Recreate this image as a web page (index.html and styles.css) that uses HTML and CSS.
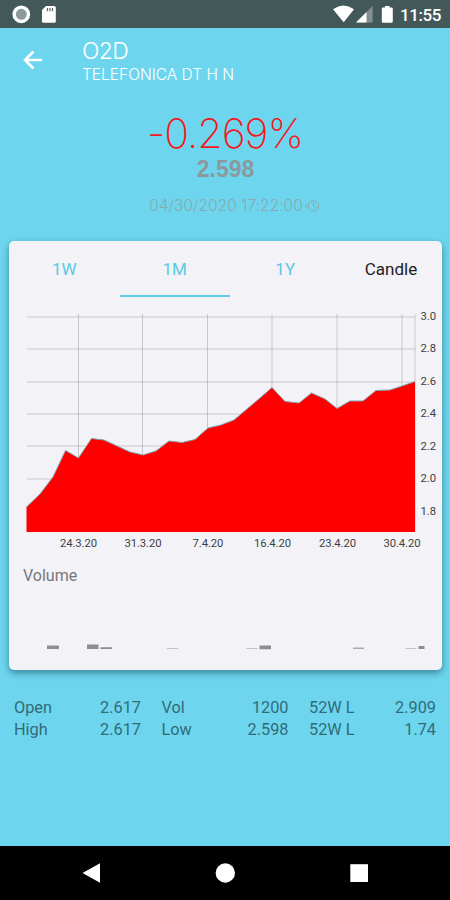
FILE: index.html
```html
<!DOCTYPE html>
<html lang="en">
<head>
<meta charset="utf-8">
<meta name="viewport" content="width=device-width">
<title>O2D</title>
<link rel="stylesheet" href="styles.css">
</head>
<body>
<div class="screen">
  <div class="status">
    <svg class="status-left" width="60" height="28" viewBox="0 0 60 28">
      <circle cx="21.3" cy="14.3" r="7.2" fill="#8e9a9a" stroke="#fff" stroke-width="3.400"/>
      <path d="M46 6h8.200q1.600 0 1.600 1.600v13.600q0 1.600-1.600 1.600H43.600Q42 22.800 42 21.200V10z" fill="#fff"/>
      <path d="M47.500 8v3.200M50 8v3.200M52.500 8v3.200" stroke="#59696a" stroke-width="1.200"/>
    </svg>
    <svg width="66" height="28" viewBox="330 0 66 28" fill="#fff">
      <path d="M333 9.200Q343.500 1.800 354 9.200L343.700 22.300z"/>
      <path d="M372.600 6v16.500H356z" fill="#82908f"/>
      <path d="M366.500 12v10.500H356z"/>
      <path d="M385 6h4.500v1.500h2q1.300 0 1.300 1.300v12.700q0 1.300-1.300 1.300h-8.400q-1.300 0-1.300-1.300V8.800q0-1.300 1.300-1.300h1.900z"/>
    </svg>
    <span class="clock">11:55</span>
  </div>

  <header class="bar">
    <svg class="back" width="20" height="20" viewBox="0 0 20 20" fill="none" stroke="#fff" stroke-width="2.600">
      <path d="M19 10H2.500M10.500 1.500L2 10l8.500 8.500"/>
    </svg>
    <div>
      <h1 class="symbol">O2D</h1>
      <p class="name">TELEFONICA DT H N</p>
    </div>
  </header>

  <section class="quote">
    <div class="change">-0.269%</div>
    <div class="price">2.598</div>
    <div class="stamp"><span>04/30/2020 17:22:00</span>
      <svg width="16" height="14" viewBox="0 0 16 14" fill="none" stroke="#89a9af" stroke-width="1">
        <circle cx="9.500" cy="7" r="5.200"/><path d="M9.500 3.500V7l2.700 1.500M1 5l2 2-2 2"/>
      </svg>
    </div>
  </section>

  <main class="card">
    <nav class="tabs">
      <span class="tab">1W</span>
      <span class="tab active">1M</span>
      <span class="tab">1Y</span>
      <span class="tab candle">Candle</span>
    </nav>
    <svg class="chart" width="432" height="250" viewBox="9 306 432 250">
      <g class="grid">
        <path d="M27 317H415M27 349H415M27 382H415M27 414H415M27 446H415M27 479H415"/>
        <path d="M78.500 314V532M142.500 314V532M207.500 314V532M272 314V532M337 314V532M402 314V532M415 314V532"/>
      </g>
      <path fill="#f00" d="M26.500 532V507L40 494 53 477 65.500 450.500 78.500 458 91.500 438.500 104 440 117 446 130 452 143 455 156 451 169 441 182 442.500 195 439.500 208 428 221 425 234 420 247 409 260 398 272 387.500 285 401.500 299 403 311.500 393 325 399 337 408.500 350 401 363 401 376 390.500 390 390 402 386 415 381.500V532z"/>
      <path class="line" d="M26.500 507L40 494 53 477 65.500 450.500 78.500 458 91.500 438.500 104 440 117 446 130 452 143 455 156 451 169 441 182 442.500 195 439.500 208 428 221 425 234 420 247 409 260 398 272 387.500 285 401.500 299 403 311.500 393 325 399 337 408.500 350 401 363 401 376 390.500 390 390 402 386 415 381.500"/>
      <g class="axis">
        <text x="420.500" y="320">3.0</text>
        <text x="420.500" y="352">2.8</text>
        <text x="420.500" y="385">2.6</text>
        <text x="420.500" y="417">2.4</text>
        <text x="420.500" y="450">2.2</text>
        <text x="420.500" y="482">2.0</text>
        <text x="420.500" y="514.500">1.8</text>
      </g>
      <g class="axis dates">
        <text x="78.500" y="547">24.3.20</text>
        <text x="143" y="547">31.3.20</text>
        <text x="208" y="547">7.4.20</text>
        <text x="272.500" y="547">16.4.20</text>
        <text x="337.500" y="547">23.4.20</text>
        <text x="402" y="547">30.4.20</text>
      </g>
    </svg>
    <h2 class="volume">Volume</h2>
    <svg class="bars" width="432" height="12" viewBox="9 640 432 12" fill="#8d8d92">
      <path d="M47 645.500h12v3.500H47zM87 644.500h11.500v4.500H87zM100.500 647.200h11.500v1.800h-11.500zM259.500 645.500H271v3.800h-11.500zM418.500 646h6v3h-6z"/>
      <path d="M353 647.500h11v1.500h-11z" fill="#aaaaae"/>
      <path d="M167 648h11v1h-11zM246.500 648h11v1h-11zM405.500 648h11v1h-11z" fill="#c2c2c6"/>
    </svg>
  </main>

  <section class="stats">
    <dl><dt>Open</dt><dd>2.617</dd><dt>High</dt><dd>2.617</dd></dl>
    <dl><dt>Vol</dt><dd>1200</dd><dt>Low</dt><dd>2.598</dd></dl>
    <dl><dt>52W L</dt><dd>2.909</dd><dt>52W L</dt><dd>1.74</dd></dl>
  </section>

  <footer class="nav">
    <svg width="20" height="20" viewBox="0 0 20 20"><path d="M1.500 10L19 .3v19.400z"/></svg>
    <svg width="20" height="20" viewBox="0 0 20 20"><circle cx="10.300" cy="10" r="9.700"/></svg>
    <svg width="20" height="20" viewBox="0 0 20 20"><path d="M1.300 1.200h17.700v17.800H1.300z"/></svg>
  </footer>
</div>
</body>
</html>
```
FILE: styles.css
```css
* { box-sizing: border-box; }
body, h1, h2, p, dl, dd { margin: 0; }
body { background: #6dd6ee; font-family: Roboto, sans-serif; }
svg { display: block; flex: none; }
.screen { width: 450px; height: 900px; display: flex; flex-direction: column; overflow: hidden; background: #6dd6ee; }
.status { height: 28px; flex: none; background: #435858; display: flex; align-items: center; }
.status-left { margin-right: auto; }
.clock { width: 54px; padding: 2px 0 0 4px; color: #fff; font-size: 17px; font-weight: 500; line-height: 28px; letter-spacing: -.4px; }
.bar { height: 82px; flex: none; display: flex; color: #fff; font-family: Inter, sans-serif; padding-left: 23px; }
.back { margin: 22px 39px 0 0; }
.symbol { margin-top: 11px; font-size: 23px; font-weight: 300; line-height: 25px; letter-spacing: -.7px; }
.name { margin-top: 1px; font-size: 15.500px; font-weight: 300; line-height: 20px; letter-spacing: 0; }
.quote { height: 131px; flex: none; text-align: center; font-family: Inter, sans-serif; }
.change { color: #f31821; font-size: 41px; font-weight: 200; line-height: 46px; letter-spacing: -1px; }
.price { padding-left: 1px; color: #8b999d; font-family: "Liberation Sans", sans-serif; font-size: 23px; font-weight: 700; line-height: 26px; }
.stamp { margin-top: 14px; display: flex; align-items: center; justify-content: center; gap: 1px; padding-left: 19px; color: #89a9af; font-size: 15.500px; font-weight: 300; line-height: 20px; letter-spacing: .05px; }
.card { flex: none; width: 432.500px; height: 429px; margin-left: 9px; background: #f2f2f7; border-radius: 5px; box-shadow: 0 3px 7px rgba(0, 55, 70, .5); }
.tabs { height: 56px; display: flex; }
.tab { width: 110.500px; text-align: center; color: #5bc9e4; font-size: 17px; line-height: 57px; }
.active { border-bottom: 2px solid #62cce4; }
.candle { width: 101px; color: #222; }
.chart { margin-top: 9px; }
.grid { fill: none; stroke: #777780; stroke-opacity: .35; stroke-width: 1; }
.line { fill: none; stroke: #80a0ac; stroke-width: 1; }
.axis { fill: #3f3f42; font-size: 11.300px; }
.dates { text-anchor: middle; letter-spacing: -.1px; }
.volume { margin: 10px 0 0 14px; color: #77777b; font-size: 16px; font-weight: 400; line-height: 20px; }
.bars { margin-top: 54px; }
.stats { display: grid; grid-template-columns: 127px 127px 127px; column-gap: 20.500px; padding: 27px 0 0 14px; color: #316b79; font-size: 16.300px; }
.stats dl { display: grid; grid-template-columns: auto auto; justify-content: space-between; line-height: 22px; }
.stats dd { text-align: right; }
.nav { margin-top: auto; height: 54px; flex: none; background: #000; display: flex; justify-content: center; align-items: center; gap: 114px; fill: #fff; }
```
